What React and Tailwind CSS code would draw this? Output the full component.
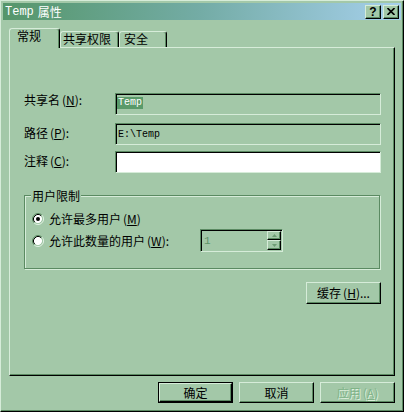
import React from "react";

function Raised({ children, className = "" }) {
  return (
    <div
      className={`flex items-center justify-center bg-[#a3c8a8] border border-t-[#d6ecd9] border-l-[#d6ecd9] border-r-black border-b-black shadow-[inset_-1px_-1px_0_#5b8a62] ${className}`}
    >
      {children}
    </div>
  );
}

function Sunken({ children, className = "" }) {
  return (
    <div
      className={`border border-t-[#5b8a62] border-l-[#5b8a62] border-r-[#d6ecd9] border-b-[#d6ecd9] shadow-[inset_1px_1px_0_#000] ${className}`}
    >
      {children}
    </div>
  );
}

function Radio({ checked }) {
  return (
    <svg width="12" height="12" viewBox="0 0 12 12" className="shrink-0">
      <circle cx="6" cy="6" r="4.2" fill="#ffffff" />
      <path d="M2.11 9.89 A5.5 5.5 0 0 1 9.89 2.11" fill="none" stroke="#5b8a62" strokeWidth="1" />
      <path d="M9.89 2.11 A5.5 5.5 0 0 1 2.11 9.89" fill="none" stroke="#e4f3e6" strokeWidth="1" />
      <path d="M2.82 9.18 A4.5 4.5 0 0 1 9.18 2.82" fill="none" stroke="#000000" strokeWidth="1" />
      <path d="M9.18 2.82 A4.5 4.5 0 0 1 2.82 9.18" fill="none" stroke="#a3c8a8" strokeWidth="1" />
      {checked && <circle cx="6" cy="6" r="2" fill="#000000" />}
    </svg>
  );
}

function Key({ k }) {
  return (
    <span className="ml-[2px]">
      (<u>{k}</u>)
    </span>
  );
}

export default function App() {
  return (
    <div className="w-[404px] h-[412px] bg-[#a3c8a8] border border-t-[#d6ecd9] border-l-[#d6ecd9] border-r-black border-b-black shadow-[inset_-1px_-1px_0_#5b8a62] p-[2px] flex flex-col font-['Noto_Sans_CJK_SC',sans-serif] text-[12px] leading-[12px] text-black overflow-hidden">
      {/* Title bar */}
      <div className="h-[17px] shrink-0 flex items-center bg-linear-to-r from-[#55966a] via-[#74aca6] to-[#a6d0ec] px-[2px]">
        <span className="text-white flex items-center">
          <span className="font-['Liberation_Mono',monospace] text-[12px] mr-[4px]">Temp</span>
          <span>属性</span>
        </span>
        <div className="ml-auto flex gap-[2px]">
          <Raised className="w-[16px] h-[14px]">
            <span className="font-['Liberation_Sans',sans-serif] font-bold text-[12px] leading-[12px]">?</span>
          </Raised>
          <Raised className="w-[16px] h-[14px]">
            <svg width="8" height="7" viewBox="0 0 8 7">
              <path d="M0.5 0 L7.5 7 M7.5 0 L0.5 7" stroke="#000" strokeWidth="1.6" />
            </svg>
          </Raised>
        </div>
      </div>

      {/* Content */}
      <div className="flex-1 flex flex-col px-[6px] pt-[8px]">
        {/* Tabs */}
        <div className="h-[19px] flex items-end">
          <div className="relative z-10 -mb-[1px] h-[20px] w-[51px] bg-[#a3c8a8] border-l border-t border-r border-l-[#d6ecd9] border-t-[#d6ecd9] border-r-black rounded-t-[3px] shadow-[inset_-1px_0_0_#5b8a62] pl-[7px] pt-[1px]">
            常规
          </div>
          <div className="h-[16px] w-[59px] border-l border-t border-r border-l-[#d6ecd9] border-t-[#d6ecd9] border-r-black rounded-t-[3px] shadow-[inset_-1px_0_0_#5b8a62] pl-[2px] pt-[1px]">
            共享权限
          </div>
          <div className="h-[16px] w-[48px] border-l border-t border-r border-l-[#d6ecd9] border-t-[#d6ecd9] border-r-black rounded-t-[3px] shadow-[inset_-1px_0_0_#5b8a62] pl-[4px] pt-[1px]">
            安全
          </div>
        </div>

        {/* Panel */}
        <div className="h-[329px] border border-t-[#d6ecd9] border-l-[#d6ecd9] border-r-black border-b-black shadow-[inset_-1px_-1px_0_#5b8a62] pl-[14px] pr-[13px] pt-[45px] flex flex-col">
          <div className="flex h-[22px]">
            <div className="w-[91px] mt-[1px]">
              共享名<Key k="N" />:
            </div>
            <Sunken className="flex-1 flex items-center pl-[1px] pt-[1px]">
              <span className="bg-[#5a9a6a] text-white font-['Liberation_Mono',monospace] text-[10px] leading-[12px] px-[1px] -mt-[3px]">
                Temp
              </span>
            </Sunken>
          </div>
          <div className="flex h-[22px] mt-[8px]">
            <div className="w-[91px] mt-[4px]">
              路径<Key k="P" />:
            </div>
            <Sunken className="flex-1 flex items-center pl-[2px] pt-[1px]">
              <span className="font-['Liberation_Mono',monospace] text-[10px] leading-[12px]">E:\Temp</span>
            </Sunken>
          </div>
          <div className="flex h-[22px] mt-[6px]">
            <div className="w-[91px] mt-[4px]">
              注释<Key k="C" />:
            </div>
            <Sunken className="flex-1 bg-white" />
          </div>

          {/* Group box */}
          <div className="relative mt-[22px] mr-[1px] h-[74px] border border-[#5b8a62] shadow-[inset_1px_1px_0_#d6ecd9,1px_1px_0_#d6ecd9] pl-[7px]">
            <div className="absolute left-[6px] -top-[6px] px-[1px] bg-[#a3c8a8]">用户限制</div>
            <div className="flex items-center h-[12px] mt-[17px]">
              <Radio checked />
              <span className="ml-[5px]">
                允许最多用户<Key k="M" />
              </span>
            </div>
            <div className="flex items-center h-[23px] mt-[4px]">
              <div className="w-[168px] flex items-center">
                <Radio />
                <span className="ml-[5px]">
                  允许此数量的用户<Key k="W" />:
                </span>
              </div>
              <Sunken className="w-[83px] h-[23px] flex items-center justify-between pl-[3px] pr-[1px]">
                <span className="font-['Liberation_Mono',monospace] text-[11px] text-[#5f9468]">1</span>
                <div className="flex flex-col">
                  <Raised className="w-[14px] h-[9px]">
                    <svg width="5" height="3" viewBox="0 0 5 3">
                      <path d="M2.5 0 L5 3 L0 3 Z" fill="#6e9d75" />
                    </svg>
                  </Raised>
                  <Raised className="w-[14px] h-[10px]">
                    <svg width="5" height="3" viewBox="0 0 5 3">
                      <path d="M0 0 L5 0 L2.5 3 Z" fill="#6e9d75" />
                    </svg>
                  </Raised>
                </div>
              </Sunken>
            </div>
          </div>

          <div className="flex justify-end mt-[13px]">
            <Raised className="w-[75px] h-[22px]">
              缓存<Key k="H" />...
            </Raised>
          </div>
        </div>

        {/* Bottom buttons */}
        <div className="mt-[6px] flex justify-end gap-[6px]">
          <div className="w-[75px] h-[21px] border border-black">
            <Raised className="w-full h-full">确定</Raised>
          </div>
          <Raised className="w-[75px] h-[21px]">取消</Raised>
          <Raised className="w-[75px] h-[21px] text-[#80b388] [text-shadow:1px_1px_0_#dcefdc]">
            应用<Key k="A" />
          </Raised>
        </div>
      </div>
    </div>
  );
}
